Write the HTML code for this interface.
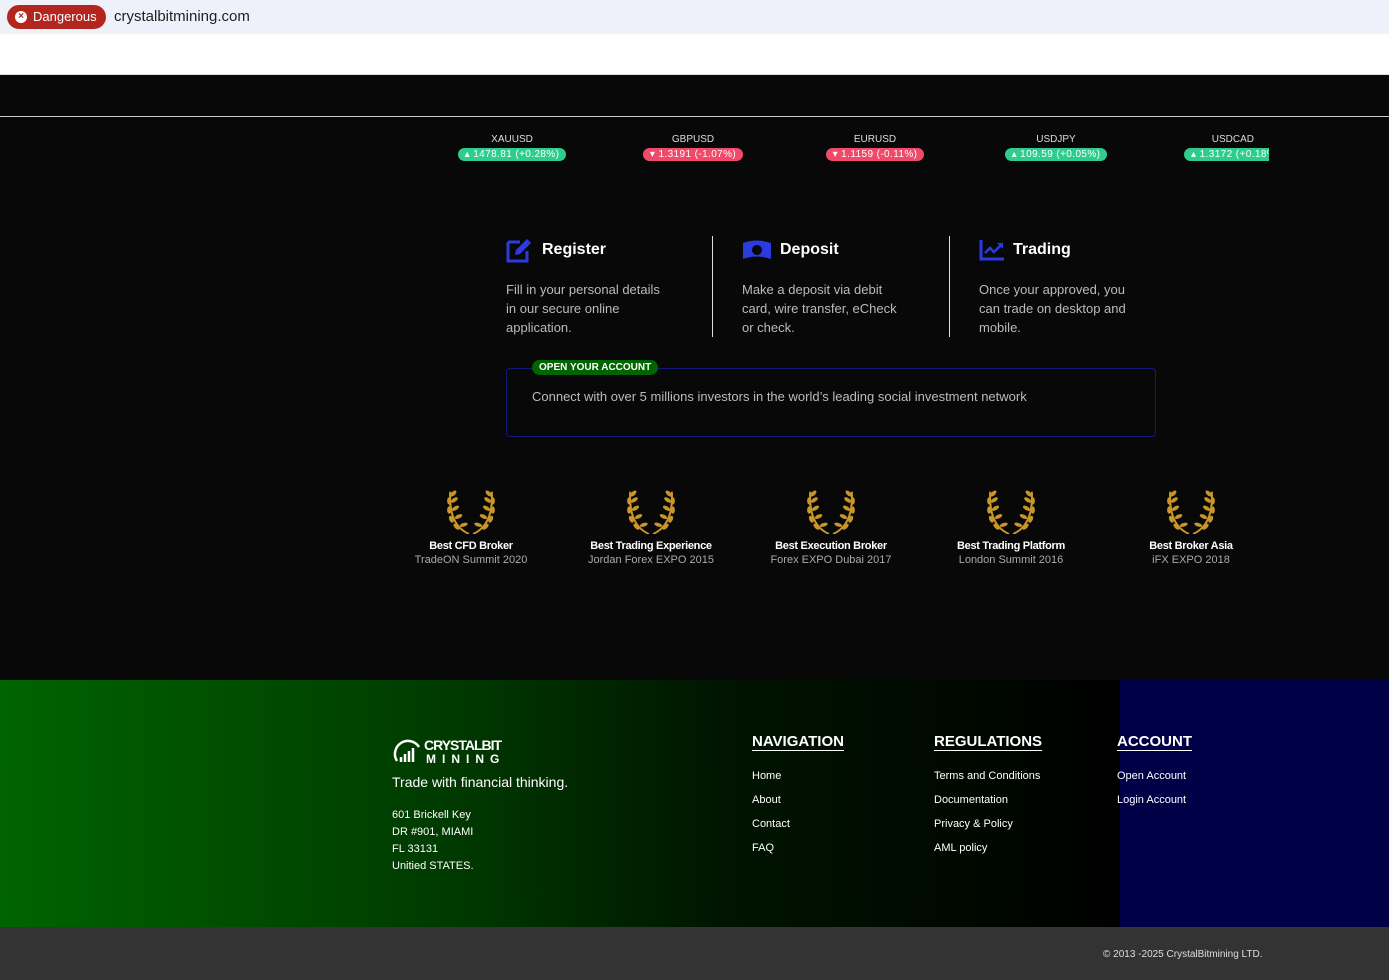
<!DOCTYPE html>
<html><head><meta charset="utf-8"><style>
*{margin:0;padding:0;box-sizing:border-box}
body{width:1389px;height:980px;background:#080808;font-family:"Liberation Sans",sans-serif;position:relative;overflow:hidden;color:#fff}
.a{position:absolute}
.tk{position:absolute;top:134px;text-align:center;font-size:10px;color:#ddd}
.tk b{display:inline-block;margin-top:3px;font-weight:normal;color:#fff;border-radius:7px;padding:1px 7px;font-size:10px;white-space:nowrap;letter-spacing:.4px}
.g{background:#2ecc8e}.r{background:#ef4a6a}
.st h3{font-size:16px;font-weight:bold;display:flex;align-items:center;gap:8px;height:28px}
.st p{font-size:13px;color:#bbb;line-height:19px;margin-top:16px;width:164px}
.aw{position:absolute;top:488px;width:180px;text-align:center}
.aw svg{display:block;margin:0 auto}
.aw h4{font-size:11px;font-weight:bold;margin-top:6px;letter-spacing:-.3px}
.aw p{font-size:11px;color:#aaa;margin-top:2px}
.fh{font-size:15px;font-weight:bold;text-decoration:underline;text-underline-offset:4px}
.fl{font-size:11px;line-height:24px;margin-top:14px}
</style></head><body>
<div class="a" style="left:0;top:0;width:1389px;height:34px;background:#eef1f9"></div>
<div class="a" style="left:0;top:34px;width:1389px;height:41px;background:#fff;border-bottom:1px solid #ddd"></div>
<div class="a" style="left:7px;top:5px;width:99px;height:24px;background:#b3261e;border-radius:12px;color:#fff;font-size:13px;line-height:24px;padding-left:26px">Dangerous</div>
<div class="a" style="left:15px;top:11px;width:12px;height:12px;border-radius:6px;background:#fff;color:#b3261e;font-size:10px;line-height:12px;text-align:center;font-weight:bold">×</div>
<div class="a" style="left:114px;top:8px;font-size:15px;color:#1f1f1f">crystalbitmining.com</div>
<div class="a" style="left:0;top:116px;width:1389px;height:1px;background:#ccc"></div>

<div class="tk" style="left:452px;width:120px">XAUUSD<br><b class="g">▴ 1478.81 (+0.28%)</b></div>
<div class="tk" style="left:636px;width:114px">GBPUSD<br><b class="r">▾ 1.3191 (-1.07%)</b></div>
<div class="tk" style="left:818px;width:114px">EURUSD<br><b class="r">▾ 1.1159 (-0.11%)</b></div>
<div class="tk" style="left:998px;width:116px">USDJPY<br><b class="g">▴ 109.59 (+0.05%)</b></div>
<div class="tk" style="left:1184px;width:85px;overflow:hidden;text-align:left">&nbsp;&nbsp;&nbsp;&nbsp;&nbsp;&nbsp;&nbsp;&nbsp;&nbsp;&nbsp;USDCAD<br><b class="g" style="border-radius:7px 0 0 7px">▴ 1.3172 (+0.18%)</b></div>

<div class="a st" style="left:506px;top:236px;width:180px"><h3><svg width="28" height="26" viewBox="0 0 28 26"><path d="M2 5h12M2 5v19h19v-10" stroke="#2b3be0" stroke-width="3" fill="none"/><path d="M9 18l1-5L21 2l4 4L14 17z" fill="#2b3be0"/></svg>Register</h3><p>Fill in your personal details in our secure online application.</p></div>
<div class="a" style="left:712px;top:236px;width:1px;height:101px;background:#ddd"></div>
<div class="a st" style="left:742px;top:236px;width:180px"><h3><svg width="30" height="22" viewBox="0 0 30 22"><path d="M1 4q14-5 28 0v16q-14-5-28 0z" fill="#2b3be0"/><circle cx="15" cy="11" r="5" fill="#080808"/></svg>Deposit</h3><p>Make a deposit via debit card, wire transfer, eCheck or check.</p></div>
<div class="a" style="left:949px;top:236px;width:1px;height:101px;background:#ddd"></div>
<div class="a st" style="left:979px;top:236px;width:180px"><h3><svg width="26" height="22" viewBox="0 0 26 22"><path d="M2 1v19h23" stroke="#2b3be0" stroke-width="3" fill="none"/><path d="M6 14l5-5 4 4 7-7" stroke="#2b3be0" stroke-width="2.5" fill="none"/><path d="M18 4h6v6z" fill="#2b3be0"/></svg>Trading</h3><p>Once your approved, you can trade on desktop and mobile.</p></div>

<div class="a" style="left:506px;top:368px;width:650px;height:69px;border:1px solid #101a7a;border-radius:4px"></div>
<div class="a" style="left:532px;top:360px;height:15px;background:#006400;border-radius:8px;font-size:10px;font-weight:bold;line-height:15px;padding:0 7px">OPEN YOUR ACCOUNT</div>
<div class="a" style="left:532px;top:389px;font-size:13px;color:#bbb">Connect with over 5 millions investors in the world’s leading social investment network</div>

<svg width="0" height="0" style="position:absolute"><defs><g id="lw"><g fill="#c9962a"><path d="M24 50Q4 40 6 4" stroke="#c9962a" stroke-width="2" fill="none"/><path d="M28 50Q48 40 46 4" stroke="#c9962a" stroke-width="2" fill="none"/><ellipse cx="9" cy="6" rx="2" ry="4" transform="rotate(40 9 6)"/><ellipse cx="5" cy="14" rx="2" ry="4"/><ellipse cx="10" cy="13" rx="2" ry="4" transform="rotate(50 10 13)"/><ellipse cx="5" cy="24" rx="2" ry="4"/><ellipse cx="11" cy="22" rx="2" ry="4" transform="rotate(55 11 22)"/><ellipse cx="7" cy="34" rx="2" ry="4" transform="rotate(-20 7 34)"/><ellipse cx="14" cy="31" rx="2" ry="4" transform="rotate(60 14 31)"/><ellipse cx="12" cy="42" rx="2" ry="4" transform="rotate(-40 12 42)"/><ellipse cx="19" cy="40" rx="2" ry="4" transform="rotate(70 19 40)"/><ellipse cx="43" cy="6" rx="2" ry="4" transform="rotate(-40 43 6)"/><ellipse cx="47" cy="14" rx="2" ry="4"/><ellipse cx="42" cy="13" rx="2" ry="4" transform="rotate(-50 42 13)"/><ellipse cx="47" cy="24" rx="2" ry="4"/><ellipse cx="41" cy="22" rx="2" ry="4" transform="rotate(-55 41 22)"/><ellipse cx="45" cy="34" rx="2" ry="4" transform="rotate(20 45 34)"/><ellipse cx="38" cy="31" rx="2" ry="4" transform="rotate(-60 38 31)"/><ellipse cx="40" cy="42" rx="2" ry="4" transform="rotate(40 40 42)"/><ellipse cx="33" cy="40" rx="2" ry="4" transform="rotate(-70 33 40)"/></g></g></defs></svg>
<div class="aw" style="left:381px"><svg width="54" height="46" viewBox="0 0 52 50" preserveAspectRatio="none"><use href="#lw"/></svg><h4>Best CFD Broker</h4><p>TradeON Summit 2020</p></div>
<div class="aw" style="left:561px"><svg width="54" height="46" viewBox="0 0 52 50" preserveAspectRatio="none"><use href="#lw"/></svg><h4>Best Trading Experience</h4><p>Jordan Forex EXPO 2015</p></div>
<div class="aw" style="left:741px"><svg width="54" height="46" viewBox="0 0 52 50" preserveAspectRatio="none"><use href="#lw"/></svg><h4>Best Execution Broker</h4><p>Forex EXPO Dubai 2017</p></div>
<div class="aw" style="left:921px"><svg width="54" height="46" viewBox="0 0 52 50" preserveAspectRatio="none"><use href="#lw"/></svg><h4>Best Trading Platform</h4><p>London Summit 2016</p></div>
<div class="aw" style="left:1101px"><svg width="54" height="46" viewBox="0 0 52 50" preserveAspectRatio="none"><use href="#lw"/></svg><h4>Best Broker Asia</h4><p>iFX EXPO 2018</p></div>

<div class="a" style="left:0;top:680px;width:1120px;height:247px;background:linear-gradient(90deg,#006400 0%,#003a00 40%,#001400 65%,#000 100%)"></div>
<div class="a" style="left:1120px;top:680px;width:269px;height:247px;background:#000047"></div>
<div class="a" style="left:393px;top:735px"><svg width="30" height="30" viewBox="0 0 30 30"><path d="M4 26A13 13 0 1 1 26 12" stroke="#fff" stroke-width="2.5" fill="none"/><path d="M8 27v-5M12 27v-8M16 27v-11M20 27v-14" stroke="#fff" stroke-width="2.5"/></svg></div>
<div class="a" style="left:424px;top:737px;font-size:14px;font-weight:bold;letter-spacing:-1px">CRYSTALBIT</div>
<div class="a" style="left:426px;top:752px;font-size:12px;font-weight:bold;letter-spacing:6px">MINING</div>
<div class="a" style="left:392px;top:774px;font-size:14px">Trade with financial thinking.</div>
<div class="a" style="left:392px;top:807px;font-size:11px;line-height:17px">601 Brickell Key<br>DR #901, MIAMI<br>FL 33131<br>Unitied STATES.</div>
<div class="a" style="left:752px;top:733px"><div class="fh">NAVIGATION</div><div class="fl">Home<br>About<br>Contact<br>FAQ</div></div>
<div class="a" style="left:934px;top:733px"><div class="fh">REGULATIONS</div><div class="fl">Terms and Conditions<br>Documentation<br>Privacy &amp; Policy<br>AML policy</div></div>
<div class="a" style="left:1117px;top:733px"><div class="fh">ACCOUNT</div><div class="fl">Open Account<br>Login Account</div></div>
<div class="a" style="left:0;top:927px;width:1389px;height:53px;background:#333"></div>
<div class="a" style="left:1103px;top:949px;font-size:10px;color:#ddd">© 2013 -2025 CrystalBitmining LTD.</div>
</body></html>
